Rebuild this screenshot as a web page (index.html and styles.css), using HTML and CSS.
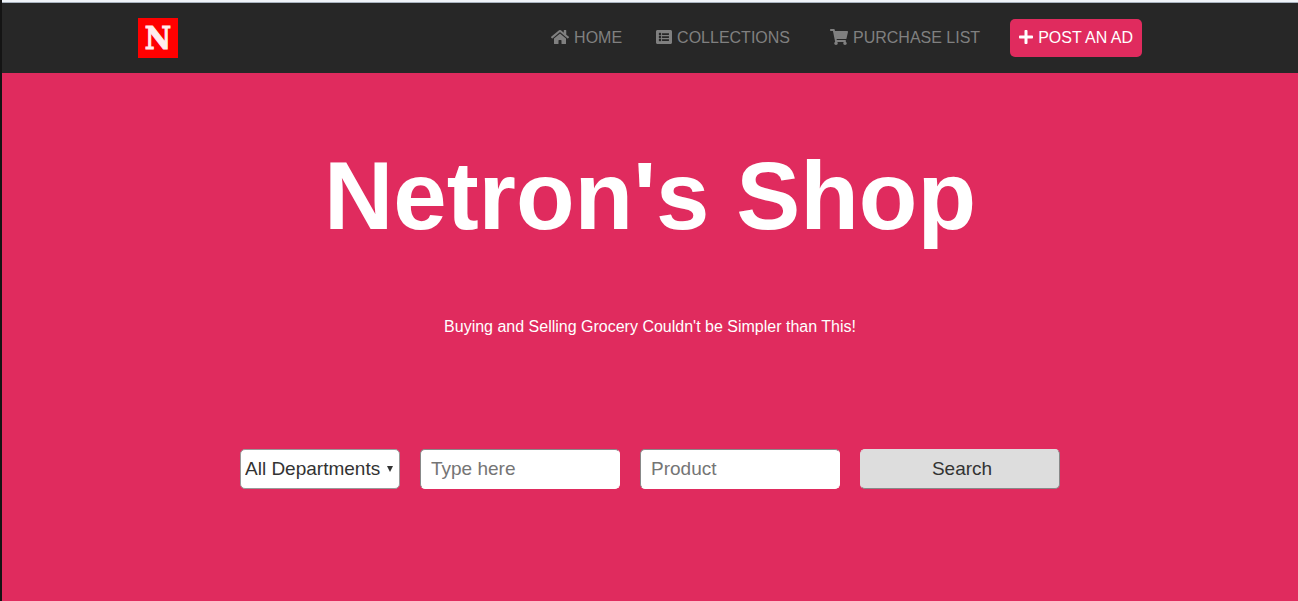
FILE: index.html
```html
<!DOCTYPE html>
<html lang="en">
<head>
<meta charset="utf-8">
<meta name="viewport" content="width=device-width, initial-scale=1">
<title>Netron's Shop</title>
<link rel="stylesheet" href="styles.css">
</head>
<body>
<header class="header">
  <div class="container">
    <a class="logo" href="#" aria-label="Netron's Shop home">N</a>
    <nav class="nav">
      <a class="nav-link" href="#">
        <svg class="icon icon-wide" viewBox="0 0 576 512" aria-hidden="true"><path d="M280.37 148.26L96 300.11V464a16 16 0 0 0 16 16l112.06-.29a16 16 0 0 0 15.92-16V368a16 16 0 0 1 16-16h64a16 16 0 0 1 16 16v95.64a16 16 0 0 0 16 16.05L464 480a16 16 0 0 0 16-16V300L295.67 148.26a12.19 12.19 0 0 0-15.3 0zM571.6 251.47L488 182.56V44.05a12 12 0 0 0-12-12h-56a12 12 0 0 0-12 12v72.61L318.47 43a48 48 0 0 0-61 0L4.34 251.47a12 12 0 0 0-1.6 16.9l25.5 31A12 12 0 0 0 45.15 301l235.22-193.74a12.19 12.19 0 0 1 15.3 0L530.9 301a12 12 0 0 0 16.9-1.6l25.5-31a12 12 0 0 0-1.7-16.93z"/></svg>
        <span>HOME</span>
      </a>
      <a class="nav-link nav-collections" href="#">
        <svg class="icon" viewBox="0 0 512 512" aria-hidden="true"><path d="M464 480H48c-26.51 0-48-21.49-48-48V80c0-26.51 21.49-48 48-48h416c26.51 0 48 21.49 48 48v352c0 26.51-21.49 48-48 48zM128 120c-22.091 0-40 17.909-40 40s17.909 40 40 40 40-17.909 40-40-17.909-40-40-40zm0 96c-22.091 0-40 17.909-40 40s17.909 40 40 40 40-17.909 40-40-17.909-40-40-40zm0 96c-22.091 0-40 17.909-40 40s17.909 40 40 40 40-17.909 40-40-17.909-40-40-40zm288-136v-32c0-6.627-5.373-12-12-12H204c-6.627 0-12 5.373-12 12v32c0 6.627 5.373 12 12 12h200c6.627 0 12-5.373 12-12zm0 96v-32c0-6.627-5.373-12-12-12H204c-6.627 0-12 5.373-12 12v32c0 6.627 5.373 12 12 12h200c6.627 0 12-5.373 12-12zm0 96v-32c0-6.627-5.373-12-12-12H204c-6.627 0-12 5.373-12 12v32c0 6.627 5.373 12 12 12h200c6.627 0 12-5.373 12-12z"/></svg>
        <span>COLLECTIONS</span>
      </a>
      <a class="nav-link nav-purchases" href="#">
        <svg class="icon icon-wide" viewBox="0 0 576 512" aria-hidden="true"><path d="M528.12 301.319l47.273-208C578.806 78.301 567.391 64 551.99 64H159.208l-9.166-44.81C147.758 8.021 137.93 0 126.529 0H24C10.745 0 0 10.745 0 24v16c0 13.255 10.745 24 24 24h69.883l70.248 343.435C147.325 417.1 136 435.222 136 456c0 30.928 25.072 56 56 56s56-25.072 56-56c0-15.674-6.447-29.835-16.824-40h209.647C430.447 426.165 424 440.326 424 456c0 30.928 25.072 56 56 56s56-25.072 56-56c0-22.172-12.888-41.332-31.579-50.405l5.517-24.276c3.413-15.018-8.002-29.319-23.403-29.319H218.117l-6.545-32h293.145c11.206 0 20.92-7.754 23.403-18.681z"/></svg>
        <span>PURCHASE LIST</span>
      </a>
      <a class="nav-link nav-button" href="#">
        <svg class="icon icon-narrow" viewBox="0 0 448 512" aria-hidden="true"><path d="M416 208H272V64c0-17.67-14.33-32-32-32h-32c-17.67 0-32 14.33-32 32v144H32c-17.67 0-32 14.33-32 32v32c0 17.67 14.33 32 32 32h144v144c0 17.67 14.33 32 32 32h32c17.67 0 32-14.33 32-32V304h144c17.67 0 32-14.33 32-32v-32c0-17.67-14.33-32-32-32z"/></svg>
        <span>POST AN AD</span>
      </a>
    </nav>
  </div>
</header>
<main class="hero">
  <h1 class="title">Netron's Shop</h1>
  <p class="tagline">Buying and Selling Grocery Couldn't be Simpler than This!</p>
  <form class="search">
    <div class="select-wrap">
      <select class="field select" aria-label="Department">
        <option>All Departments</option>
      </select>
      <svg class="arrow" viewBox="0 0 6 6" aria-hidden="true"><path d="M0 0h6L3 6z"/></svg>
    </div>
    <input class="field input" type="text" placeholder="Type here" aria-label="Keyword">
    <input class="field input" type="text" placeholder="Product" aria-label="Product">
    <button class="field submit" type="submit">Search</button>
  </form>
</main>
</body>
</html>
```
FILE: styles.css
```css
* {
  box-sizing: border-box;
}

body {
  display: flex;
  flex-direction: column;
  min-height: 100vh;
  margin: 0;
  border-left: 2px solid #141414;
  background: #e02b5e;
  font-family: "Liberation Sans", Arial, sans-serif;
  font-size: 16px;
}

.header {
  padding-top: 1px;
  border-top: 2px solid #f0f4f9;
  background: #272727;
  box-shadow: inset 0 1px 0 #a9b3bf;
}

.container {
  display: flex;
  align-items: center;
  justify-content: space-between;
  max-width: 1024px;
  min-height: 70px;
  margin: 0 auto;
}

.logo {
  display: flex;
  align-items: center;
  justify-content: center;
  width: 40px;
  height: 40px;
  background: #ff0000;
  color: #ffeeee;
  font-family: "DejaVu Serif Condensed", "DejaVu Serif", serif;
  font-size: 32px;
  font-weight: bold;
  line-height: 40px;
  text-decoration: none;
  -webkit-text-stroke: 1px #ffeeee;
}

.nav {
  display: flex;
  align-items: center;
  gap: 30px;
  padding-right: 20px;
}

.nav-link {
  display: flex;
  align-items: flex-start;
  gap: 5px;
  color: #808080;
  line-height: 18px;
  text-decoration: none;
  white-space: nowrap;
}

.nav-collections {
  padding-left: 4px;
}

.nav-purchases {
  padding-left: 10px;
}

.nav-button {
  padding: 10px 9px;
  border-radius: 5px;
  background: #e02b5e;
  color: #ffffff;
}

.icon {
  width: 16px;
  height: 16px;
  fill: currentColor;
}

.icon-wide {
  width: 18px;
}

.icon-narrow {
  width: 14px;
}

.hero {
  display: flex;
  flex: 1;
  flex-direction: column;
  align-items: center;
  padding: 68px 20px;
  color: #ffffff;
  text-align: center;
}

.title {
  margin: 0;
  font-size: 96px;
  line-height: 110px;
}

.tagline {
  margin: 67px 0 0;
  line-height: 18px;
}

.search {
  display: grid;
  grid-template-columns: 160px 200px 200px 200px;
  gap: 20px;
  margin-top: 113px;
}

.field {
  width: 100%;
  height: 40px;
  margin: 0;
  border: 1px solid #999999;
  border-radius: 5px;
  background: #ffffff;
  color: #333333;
  font-family: inherit;
  font-size: 19px;
}

.select-wrap {
  position: relative;
}

.select {
  padding: 0 4px 2px;
  appearance: none;
}

.arrow {
  position: absolute;
  top: 17px;
  right: 7px;
  width: 6px;
  height: 6px;
  fill: #333333;
  pointer-events: none;
}

.input {
  padding: 0 10px;
  border-color: #888888 #ffffff #ffffff #888888;
}

.input::placeholder {
  color: #757575;
}

.submit {
  padding: 0 6px 0 10px;
  border-color: #dddddd #888888 #888888 #dddddd;
  background: #dddddd;
}
```
